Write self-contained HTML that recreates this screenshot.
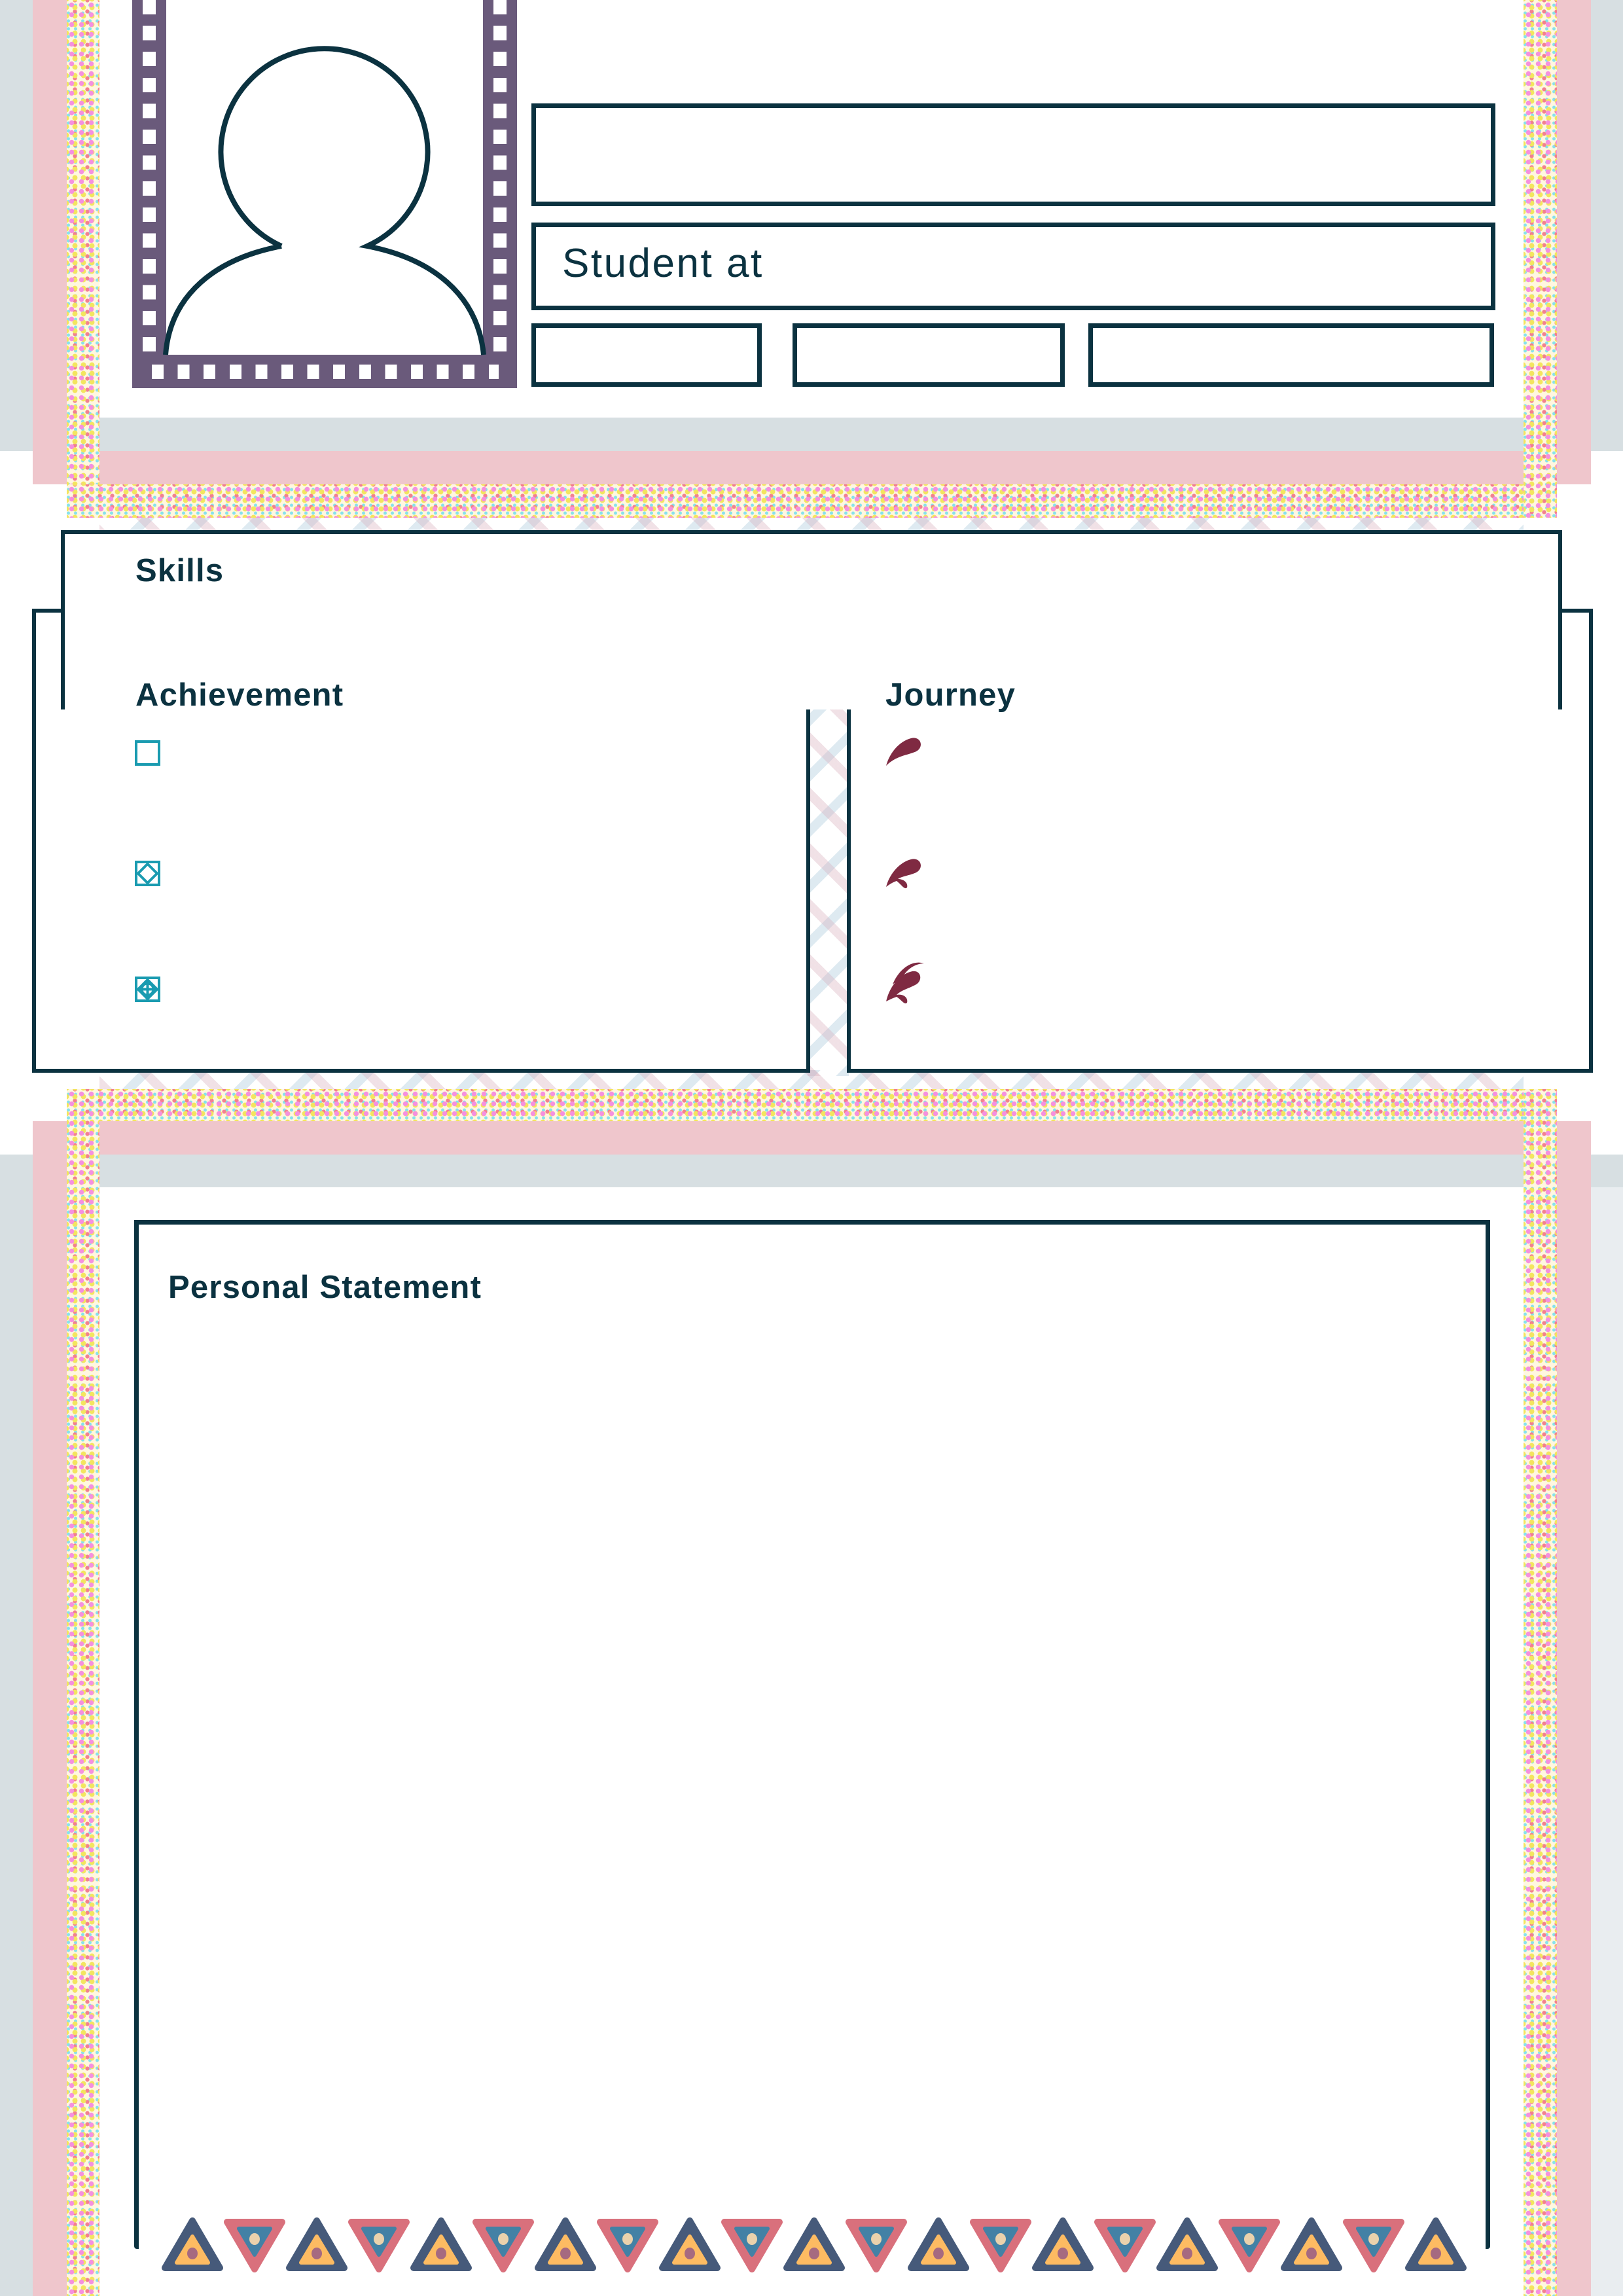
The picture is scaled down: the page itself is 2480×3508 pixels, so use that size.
<!DOCTYPE html>
<html><head><meta charset="utf-8">
<style>
*{margin:0;padding:0;box-sizing:border-box}
body{width:2480px;height:3508px;position:relative;background:#fff;overflow:hidden;font-family:"Liberation Sans",sans-serif;color:#0b3240}
.a{position:absolute}
.g{background:#d7dfe2}
.p{background:#efc6cc}
.d{background-color:#fff7e0;background-image:radial-gradient(circle,#f590df 3.4px,transparent 4px),radial-gradient(circle,#f3e55e 3.6px,transparent 4.2px),radial-gradient(circle,#f2808f 2.8px,transparent 3.4px),radial-gradient(circle,#86e2ec 2.2px,transparent 2.8px);background-size:15px 15px,13px 13px,19px 17px,11px 12px;background-position:0 0,6px 5px,3px 9px,8px 2px}
.pat{background:repeating-linear-gradient(45deg,rgba(214,170,185,.35) 0 14px,transparent 14px 60px),repeating-linear-gradient(-45deg,rgba(160,195,215,.35) 0 14px,transparent 14px 60px)}
.box{border:7px solid #0b3240;background:#fff}
h2{position:absolute;font-size:49px;font-weight:bold;letter-spacing:1.2px}
</style></head><body>

<div class="a g" style="left:0;top:0;width:50px;height:689px"></div>
<div class="a g" style="left:0;top:638px;width:2480px;height:51px"></div>
<div class="a g" style="left:2431px;top:0;width:49px;height:689px"></div>
<div class="a p" style="left:50px;top:0;width:52px;height:740px"></div>
<div class="a p" style="left:50px;top:689px;width:2381px;height:51px"></div>
<div class="a p" style="left:2379px;top:0;width:52px;height:740px"></div>
<div class="a d" style="left:102px;top:0;width:50px;height:791px"></div>
<div class="a d" style="left:102px;top:740px;width:2277px;height:51px"></div>
<div class="a d" style="left:2328px;top:0;width:51px;height:791px"></div>

<div class="a" style="left:202px;top:0;width:588px;height:593px;background:#6a5a7b"></div>
<div class="a" style="left:218px;top:0;width:20px;height:540px;background:repeating-linear-gradient(180deg,#fff 0 22px,transparent 22px 39.6px)"></div>
<div class="a" style="left:754px;top:0;width:20px;height:540px;background:repeating-linear-gradient(180deg,#fff 0 22px,transparent 22px 39.6px)"></div>
<div class="a" style="left:232px;top:557px;width:530px;height:22px;background:repeating-linear-gradient(90deg,#fff 0 18px,transparent 18px 39.6px)"></div>
<div class="a" style="left:254px;top:0;width:484px;height:542px;background:#fff"></div>
<svg class="a" style="left:0;top:0" width="800" height="600">
<path d="M430,376 A158,158 0 1 1 561,376 C660,395 730,450 739,542 M430,376 C330,395 260,450 253,542" fill="none" stroke="#0b3240" stroke-width="8"/>
</svg>

<div class="a box" style="left:812px;top:158px;width:1473px;height:157px"></div>
<div class="a box" style="left:812px;top:340px;width:1473px;height:134px"></div>
<div class="a" style="left:859px;top:367px;font-size:62px;font-weight:300;letter-spacing:2.5px">Student at</div>
<div class="a box" style="left:812px;top:494px;width:352px;height:97px"></div>
<div class="a box" style="left:1211px;top:494px;width:416px;height:97px"></div>
<div class="a box" style="left:1663px;top:494px;width:620px;height:97px"></div>

<div class="a pat" style="left:152px;top:791px;width:2176px;height:30px"></div>
<div class="a pat" style="left:1234px;top:1084px;width:63px;height:560px"></div>
<div class="a pat" style="left:152px;top:1635px;width:2176px;height:29px"></div>

<div class="a box" style="left:49px;top:930px;width:1189px;height:709px;border-width:6px"></div>
<div class="a box" style="left:1294px;top:930px;width:1140px;height:709px;border-width:6px"></div>
<div class="a box" style="left:93px;top:810px;width:2294px;height:274px;border-width:6px;border-bottom:none"></div>
<h2 style="left:207px;top:844px">Skills</h2>
<h2 style="left:207px;top:1034px">Achievement</h2>
<h2 style="left:1353px;top:1034px">Journey</h2>

<svg class="a" style="left:200px;top:1120px" width="60" height="420">
<g fill="none" stroke="#1a9bb0" stroke-width="4">
<rect x="8" y="13" width="35" height="35"/>
<rect x="8" y="197" width="35" height="35"/>
<path d="M25.5,200 L40,214.5 L25.5,229 L11,214.5Z"/>
<rect x="8" y="374" width="35" height="35"/>
<path d="M25.5,377 L40,391.5 L25.5,406 L11,391.5Z M25.5,374 V409 M8,391.5 H43"/>
<circle cx="25.5" cy="391.5" r="9"/>
</g></svg>
<svg class="a" style="left:1350px;top:1120px" width="70" height="420" fill="#7f2a42">
<path d="M4,50 C10,28 26,12 42,8 C58,4 62,22 50,28 C38,34 20,34 4,50Z"/>
<path d="M4,235 C10,213 26,197 42,193 C58,189 62,207 50,213 C40,218 30,218 22,223 C30,223 38,228 36,236 C32,240 28,232 20,226 C14,228 8,232 4,235Z"/>
<path d="M4,410 C10,385 26,368 44,364 C58,362 60,378 50,384 C40,390 28,392 20,400 C30,398 38,404 36,412 C32,416 28,408 20,403 C14,405 8,408 4,410Z M14,384 C24,360 44,346 62,352 C50,352 36,360 30,372 Z"/>
</svg>

<div class="a g" style="left:0;top:1764px;width:50px;height:1744px"></div>
<div class="a g" style="left:0;top:1764px;width:2480px;height:50px"></div>
<div class="a" style="left:2431px;top:1814px;width:49px;height:1694px;background:#e9edf0"></div>
<div class="a p" style="left:50px;top:1713px;width:52px;height:1795px"></div>
<div class="a p" style="left:50px;top:1713px;width:2381px;height:51px"></div>
<div class="a p" style="left:2379px;top:1713px;width:52px;height:1795px"></div>
<div class="a d" style="left:102px;top:1664px;width:50px;height:1844px"></div>
<div class="a d" style="left:102px;top:1664px;width:2277px;height:49px"></div>
<div class="a d" style="left:2328px;top:1664px;width:51px;height:1844px"></div>

<div class="a" style="left:205px;top:1864px;width:2072px;height:1572px;border:7px solid #0b3240;border-bottom:none;border-radius:0 0 4px 4px"></div>
<h2 style="left:257px;top:1939px">Personal Statement</h2>

<svg class="a" style="left:0;top:3385px" width="2480" height="100">
<defs>
<g id="up"><polygon points="48,8 90,80 6,80" fill="#465a7a" stroke="#465a7a" stroke-width="10" stroke-linejoin="round"/><polygon points="48,32 72,72 24,72" fill="#fdbb62" stroke="#fdbb62" stroke-width="6" stroke-linejoin="round"/><ellipse cx="48" cy="58" rx="8" ry="9" fill="#a66a80"/></g>
<g id="dn"><polygon points="6,10 90,10 48,82" fill="#d9707c" stroke="#d9707c" stroke-width="10" stroke-linejoin="round"/><polygon points="24,20 72,20 48,60" fill="#4381a5" stroke="#4381a5" stroke-width="6" stroke-linejoin="round"/><ellipse cx="48" cy="36" rx="8" ry="9" fill="#ead2ac"/></g>
</defs>
<use href="#up" x="246"/><use href="#dn" x="341"/><use href="#up" x="436"/><use href="#dn" x="531"/><use href="#up" x="626"/><use href="#dn" x="721"/><use href="#up" x="816"/><use href="#dn" x="911"/><use href="#up" x="1006"/><use href="#dn" x="1101"/><use href="#up" x="1196"/><use href="#dn" x="1291"/><use href="#up" x="1386"/><use href="#dn" x="1481"/><use href="#up" x="1576"/><use href="#dn" x="1671"/><use href="#up" x="1766"/><use href="#dn" x="1861"/><use href="#up" x="1956"/><use href="#dn" x="2051"/><use href="#up" x="2146"/>
</svg>
</body></html>
